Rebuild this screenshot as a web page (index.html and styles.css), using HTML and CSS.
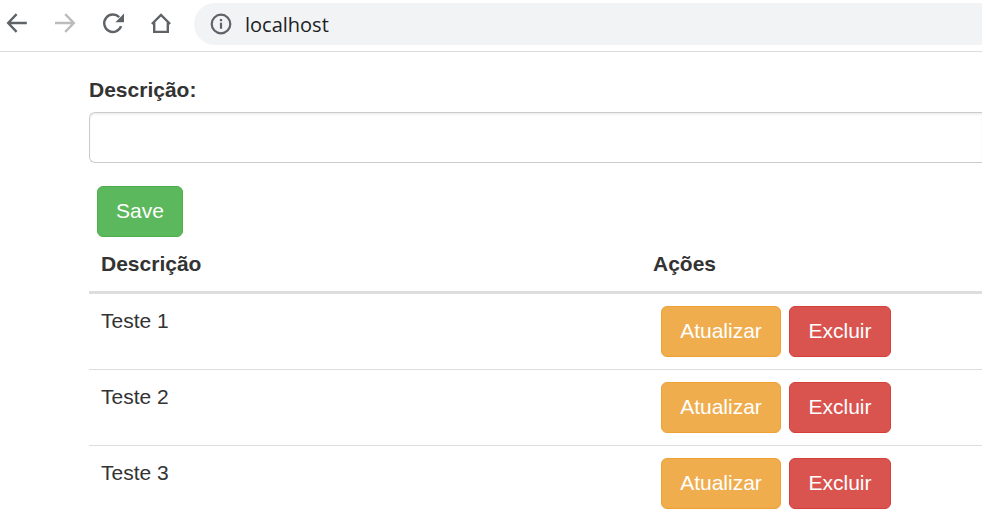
FILE: index.html
```html
<!DOCTYPE html>
<html lang="pt-BR">
<head>
<meta charset="utf-8">
<title>localhost</title>
<link rel="stylesheet" href="styles.css">
</head>
<body>
<header class="toolbar">
  <svg class="nav-icon" viewBox="0 0 24 24"><path d="M21.8 12H3.8M11.6 3.2L3.2 12l8.4 8.8"/></svg>
  <svg class="nav-icon disabled" viewBox="0 0 24 24"><path d="M2 12h18M12.2 3.2l8.6 8.8-8.6 8.8"/></svg>
  <svg class="nav-icon" viewBox="0 0 24 24"><path d="M20.1 15.2A8.7 8.7 0 1 1 18.2 6.2"/><path class="solid" d="M23 2.6v8.6h-8.6z"/></svg>
  <svg class="nav-icon" viewBox="0 0 24 24"><path d="M2.9 13L12 4l9.1 9M5.2 11.5v9.4h13.6v-9.4"/></svg>
  <div class="omnibox">
    <svg class="info-icon" viewBox="0 0 22 22"><circle cx="11" cy="11" r="9.3"/><path d="M11 9.8v6M11 5.9v2.3"/></svg>
    <span class="url">localhost</span>
  </div>
</header>
<main class="container">
  <form class="form">
    <label class="label" for="descricao">Descrição:</label>
    <input class="form-control" id="descricao" type="text">
    <button class="btn btn-success" type="button">Save</button>
  </form>
  <table class="table">
    <thead>
      <tr><th class="col-desc">Descrição</th><th>Ações</th></tr>
    </thead>
    <tbody>
      <tr><td>Teste 1</td><td><div class="actions"><button class="btn btn-warning">Atualizar</button><button class="btn btn-danger">Excluir</button></div></td></tr>
      <tr><td>Teste 2</td><td><div class="actions"><button class="btn btn-warning">Atualizar</button><button class="btn btn-danger">Excluir</button></div></td></tr>
      <tr><td>Teste 3</td><td><div class="actions"><button class="btn btn-warning">Atualizar</button><button class="btn btn-danger">Excluir</button></div></td></tr>
    </tbody>
  </table>
</main>
</body>
</html>
```
FILE: styles.css
```css
* { box-sizing: border-box; }

body {
  margin: 0;
  overflow: hidden;
  background: #fff;
  color: #333;
  font: 21px/30px "Liberation Sans", Arial, sans-serif;
}

.toolbar {
  display: flex;
  align-items: flex-start;
  height: 52px;
  padding: 3px 0 0 5px;
  border-bottom: 1px solid #dadce0;
}

.nav-icon {
  flex: none;
  width: 24px;
  height: 24px;
  margin: 8px 24px 0 0;
  fill: none;
  stroke: #5f6368;
  stroke-width: 2.4;
}

.nav-icon.disabled { stroke: #babcbe; }

.nav-icon .solid {
  fill: #5f6368;
  stroke: none;
}

.omnibox {
  display: flex;
  flex: 1;
  align-items: center;
  height: 42px;
  margin-left: -3px;
  padding-left: 16px;
  border-radius: 21px 0 0 21px;
  background: #f1f3f4;
}

.info-icon {
  width: 22px;
  height: 22px;
  margin-right: 13px;
  fill: none;
  stroke: #5f6368;
  stroke-width: 2.2;
}

.url {
  padding-top: 2px;
  color: #202124;
  font: 20px/40px "Open Sans", sans-serif;
}

.container { padding: 23px 0 0 89px; }

.form {
  display: flex;
  flex-direction: column;
  align-items: flex-start;
}

.label {
  margin-bottom: 7px;
  font-weight: bold;
}

.form-control {
  width: 100%;
  height: 51px;
  margin-bottom: 23px;
  padding: 9px 18px;
  border: 1px solid #ccc;
  border-right: 0;
  border-radius: 6px 0 0 6px;
  box-shadow: inset 0 1.5px 1.5px rgba(0, 0, 0, .075);
  font: inherit;
}

.btn {
  height: 51px;
  margin-left: 8px;
  padding: 0 18px 2px;
  border: 1px solid;
  border-radius: 6px;
  color: #fff;
  font: inherit;
}

.btn-success { background: #5cb85c; border-color: #4cae4c; }
.btn-warning { width: 120px; background: #f0ad4e; border-color: #eea236; }
.btn-danger { width: 102px; background: #d9534f; border-color: #d43f3a; }

.table {
  width: 100%;
  border-spacing: 0;
  table-layout: fixed;
}

.col-desc { width: 552px; }

th,
td {
  padding: 12px;
  text-align: left;
  vertical-align: top;
}

th { border-bottom: 3px solid #ddd; }

td { border-top: 1px solid #ddd; }

tbody tr:first-child td { border-top: 0; }

.actions { display: flex; }
```
